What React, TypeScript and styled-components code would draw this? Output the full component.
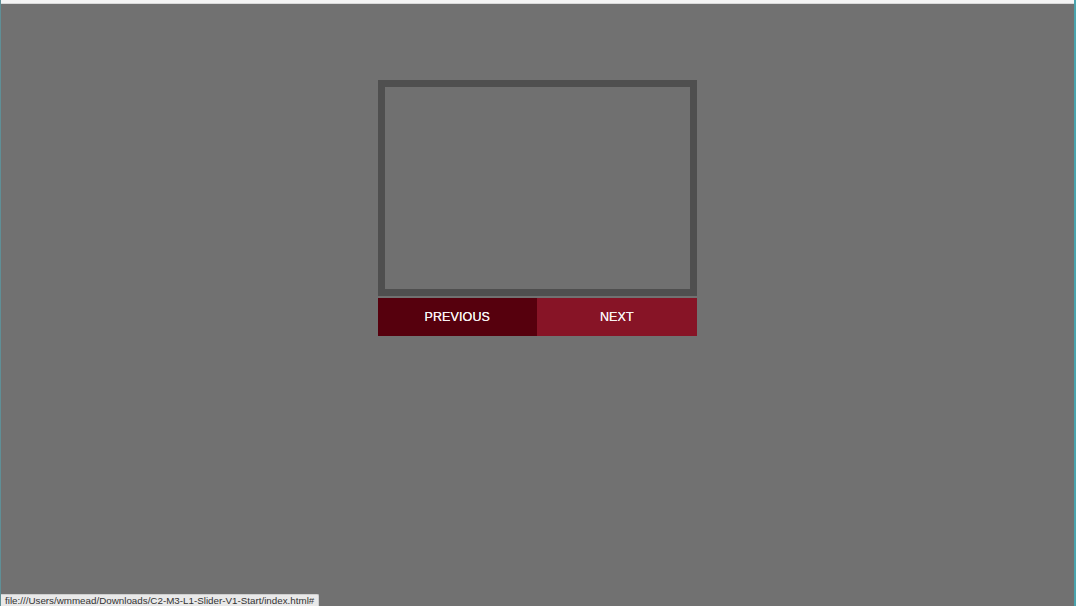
import React from "react";
import styled, { createGlobalStyle } from "styled-components";

const Global = createGlobalStyle`
  html, body { margin: 0; padding: 0; }
  body {
    background: #717171;
    font-family: "Liberation Sans", Arial, sans-serif;
    overflow: hidden;
  }
`;

const Page = styled.div`
  position: relative;
  width: 1076px;
  height: 606px;
  background: #717171;
  display: flex;
  flex-direction: column;
  box-sizing: border-box;
  border-left: 1px solid #5f8f96;
  border-right: 2px solid #4aa3ad;
`;

const TopStrip = styled.div`
  height: 4px;
  background: #f4f4f4;
  border-bottom: 1px solid #d9d9d9;
  box-sizing: border-box;
`;

const Stage = styled.main`
  display: flex;
  flex-direction: column;
  align-items: center;
  padding-top: 76px;
  padding-right: 1px;
`;

const Slider = styled.section`
  width: 319px;
  display: flex;
  flex-direction: column;
  gap: 2px;
`;

const Frame = styled.div`
  height: 216px;
  box-sizing: border-box;
  border: 7px solid #4f4f4f;
  background: #707070;
`;

const Controls = styled.div`
  display: grid;
  grid-template-columns: 1fr 1fr;
  height: 38px;
`;

const NavButton = styled.button<{ $tone: "dark" | "light" }>`
  border: none;
  margin: 0;
  padding: 0;
  background: ${(p) => (p.$tone === "dark" ? "#56000d" : "#871426")};
  color: #f7f2f3;
  font-family: "Liberation Sans", Arial, sans-serif;
  font-size: 12.5px;
  letter-spacing: 0.1px;
  text-shadow: 0 0 0.4px #fff;
  text-transform: uppercase;
  cursor: pointer;
`;

const StatusBar = styled.div`
  position: absolute;
  left: 0;
  bottom: 0;
  height: 11px;
  padding: 0 4px 0 4px;
  background: #e9e9e9;
  border-top: 1px solid #cfcfcf;
  border-right: 1px solid #cfcfcf;
  border-top-right-radius: 2px;
  color: #333;
  font-family: "Liberation Sans", Arial, sans-serif;
  font-size: 9.8px;
  line-height: 11px;
  white-space: nowrap;
`;

export default function App() {
  return (
    <>
      <Global />
      <Page>
        <TopStrip />
        <Stage>
          <Slider>
            <Frame />
            <Controls>
              <NavButton $tone="dark">Previous</NavButton>
              <NavButton $tone="light">Next</NavButton>
            </Controls>
          </Slider>
        </Stage>
        <StatusBar>file:///Users/wmmead/Downloads/C2-M3-L1-Slider-V1-Start/index.html#</StatusBar>
      </Page>
    </>
  );
}
